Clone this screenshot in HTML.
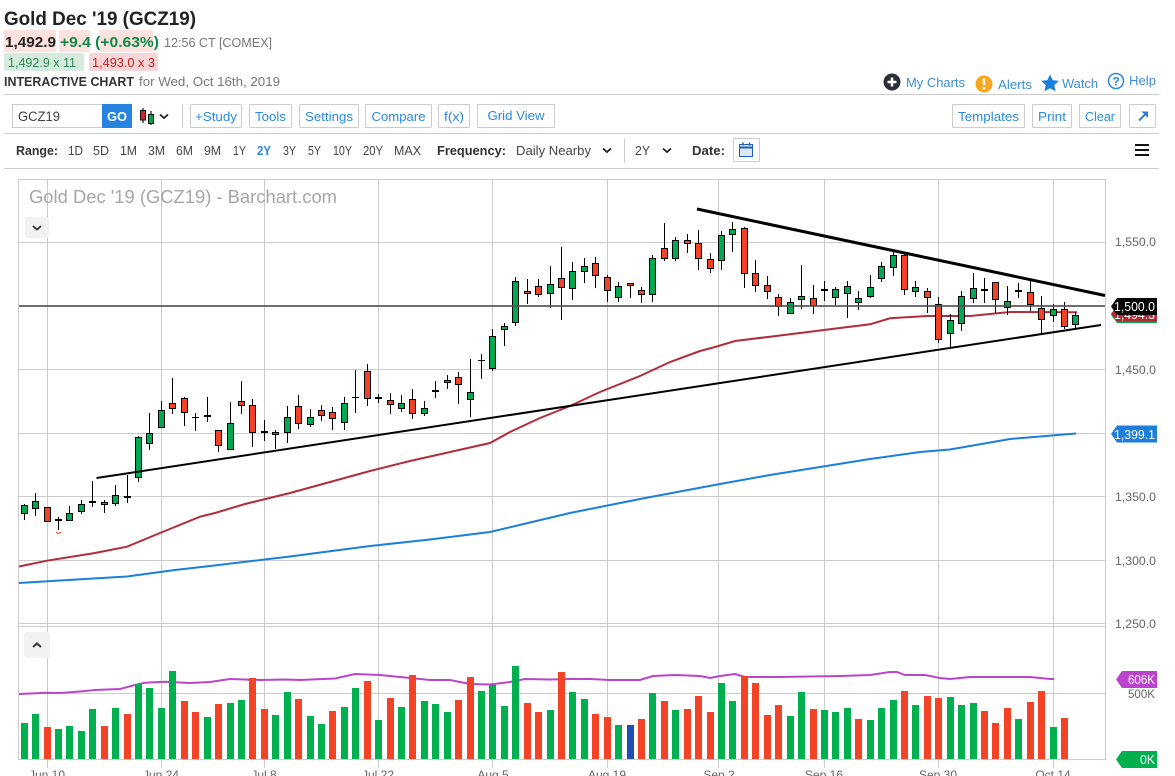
<!DOCTYPE html>
<html><head><meta charset="utf-8"><title>Gold Dec '19 (GCZ19)</title>
<style>
html,body{margin:0;padding:0;background:#fff;overflow:hidden}
svg{display:block}
text{font-family:"Liberation Sans",sans-serif;font-size:13px;fill:#444}
.b{fill:#2b8ae0;text-anchor:middle}
.btn{fill:#fff;stroke:#ccc;stroke-width:1}
.r{fill:#444;text-anchor:middle}
.ax{fill:#666;text-anchor:end;font-size:12px}
.dt{fill:#666;text-anchor:middle;font-size:12px}
.l{fill:#fff;text-anchor:end;font-size:13px}
.ln{stroke:#ccc;stroke-width:1;fill:none}
</style></head><body>
<svg width="1175" height="776" viewBox="0 0 1175 776" xmlns="http://www.w3.org/2000/svg">
<rect width="1175" height="776" fill="#fff"/>
<text x="4" y="25" textLength="192" lengthAdjust="spacingAndGlyphs" style="font-size:19px;font-weight:bold;fill:#222">Gold Dec '19 (GCZ19)</text>
<rect x="4" y="30" width="52" height="22" fill="#fde2df"/><rect x="59" y="30" width="31" height="22" fill="#fde2df"/><rect x="100" y="30" width="53" height="22" fill="#fde2df"/>
<text x="5" y="47" textLength="51" lengthAdjust="spacingAndGlyphs" style="font-size:15px;font-weight:bold;fill:#222">1,492.9</text>
<text x="60" y="47" textLength="99" lengthAdjust="spacingAndGlyphs" style="font-size:15px;font-weight:bold;fill:#0d8a47">+9.4 (+0.63%)</text>
<text x="164" y="47" textLength="108" lengthAdjust="spacingAndGlyphs" style="fill:#777">12:56 CT [COMEX]</text>
<rect x="4" y="53" width="80" height="18" rx="2" fill="#d6ebdd"/><rect x="89" y="53" width="69" height="18" rx="2" fill="#f6d6d6"/>
<text x="8" y="67" textLength="68" lengthAdjust="spacingAndGlyphs" style="fill:#2e8b57">1,492.9 x 11</text>
<text x="92" y="67" textLength="63" lengthAdjust="spacingAndGlyphs" style="fill:#c81e1e">1,493.0 x 3</text>
<text x="4" y="86" textLength="130" lengthAdjust="spacingAndGlyphs" style="font-weight:bold;fill:#333">INTERACTIVE CHART</text>
<text x="139" y="86" textLength="141" lengthAdjust="spacingAndGlyphs" style="fill:#777">for Wed, Oct 16th, 2019</text>

<circle cx="892" cy="82" r="8.5" fill="#2a2f36"/><path d="M892 77.5v9M887.5 82h9" stroke="#fff" stroke-width="2.6"/>
<text x="906" y="87" textLength="59" lengthAdjust="spacingAndGlyphs" style="fill:#3b8fdc">My Charts</text>
<circle cx="984" cy="84" r="8.5" fill="#fba61f"/><path d="M984 78.5v6.5M984 87v2.2" stroke="#fff" stroke-width="2.4"/>
<text x="998" y="89" textLength="34" lengthAdjust="spacingAndGlyphs" style="fill:#3b8fdc">Alerts</text>
<path d="M1050 74.5l2.7 5.6 6.1.8-4.5 4.2 1.2 6.1-5.5-3-5.5 3 1.2-6.1-4.5-4.2 6.1-.8z" fill="#1c7fe0"/>
<text x="1062" y="88" textLength="36" lengthAdjust="spacingAndGlyphs" style="fill:#3b8fdc">Watch</text>
<circle cx="1116" cy="81" r="7.5" fill="none" stroke="#2b8ae0" stroke-width="1.5"/>
<text x="1116" y="85.5" class="b" style="font-size:12px;font-weight:bold">?</text>
<text x="1129" y="85" textLength="27" lengthAdjust="spacingAndGlyphs" style="fill:#3b8fdc">Help</text>

<path class="ln" d="M4 94.5H1159M4 133.5H1159M4 168.5H1159M182.5 104V128M624.5 138V163"/>
<rect x="12.500" y="104.500" width="90" height="23" class="btn"/>
<text x="18" y="121" textLength="42" lengthAdjust="spacingAndGlyphs" style="fill:#444;font-size:14px">GCZ19</text>
<rect x="102" y="104" width="30" height="24" fill="#2584e0"/>
<text x="117" y="121" textLength="20" lengthAdjust="spacingAndGlyphs" style="fill:#fff;font-weight:bold;text-anchor:middle">GO</text>
<path d="M143 108v15M151 111v14" stroke="#111" stroke-width="1.2"/>
<rect x="140.500" y="110.500" width="5" height="9.500" fill="#d4202a" stroke="#111"/><rect x="148.500" y="114.500" width="5" height="9" fill="#0aa14f" stroke="#111"/>
<path d="M160 114.500l4 3.500 4-3.500" fill="none" stroke="#222" stroke-width="1.800"/>

<rect x="190.500" y="104.500" width="51" height="23" rx="1" class="btn"/><text x="216" y="121" class="b" textLength="42" lengthAdjust="spacingAndGlyphs">+Study</text>
<rect x="249.500" y="104.500" width="42" height="23" rx="1" class="btn"/><text x="270.500" y="121" class="b" textLength="31" lengthAdjust="spacingAndGlyphs">Tools</text>
<rect x="299.500" y="104.500" width="59" height="23" rx="1" class="btn"/><text x="329" y="121" class="b" textLength="48" lengthAdjust="spacingAndGlyphs">Settings</text>
<rect x="365.500" y="104.500" width="66" height="23" rx="1" class="btn"/><text x="398.500" y="121" class="b" textLength="54" lengthAdjust="spacingAndGlyphs">Compare</text>
<rect x="438.500" y="104.500" width="31" height="23" rx="1" class="btn"/><text x="454" y="121" class="b" textLength="20" lengthAdjust="spacingAndGlyphs">f(x)</text>
<rect x="477.500" y="104.500" width="77" height="23" rx="1" class="btn"/><text x="516" y="120" class="b" textLength="57" lengthAdjust="spacingAndGlyphs">Grid View</text>
<rect x="952.500" y="104.500" width="72" height="23" rx="1" class="btn"/><text x="988.500" y="121" class="b" textLength="61" lengthAdjust="spacingAndGlyphs">Templates</text>
<rect x="1032.500" y="104.500" width="39" height="23" rx="1" class="btn"/><text x="1052" y="121" class="b" textLength="28" lengthAdjust="spacingAndGlyphs">Print</text>
<rect x="1079.500" y="104.500" width="41" height="23" rx="1" class="btn"/><text x="1100" y="121" class="b" textLength="30" lengthAdjust="spacingAndGlyphs">Clear</text>
<rect x="1129.500" y="104.500" width="26" height="23" rx="1" class="btn"/>
<path d="M1139 120.500l6.500-6.500" stroke="#2b7ed0" stroke-width="2"/><path d="M1141.500 111.500h6.500v6.500z" fill="#2b7ed0"/>

<text x="16" y="155" textLength="42" lengthAdjust="spacingAndGlyphs" style="font-weight:bold;fill:#333">Range:</text>
<text x="75.500" y="155" class="r" textLength="15" lengthAdjust="spacingAndGlyphs">1D</text>
<text x="101" y="155" class="r" textLength="16" lengthAdjust="spacingAndGlyphs">5D</text>
<text x="128.500" y="155" class="r" textLength="17" lengthAdjust="spacingAndGlyphs">1M</text>
<text x="156.500" y="155" class="r" textLength="17" lengthAdjust="spacingAndGlyphs">3M</text>
<text x="184.500" y="155" class="r" textLength="17" lengthAdjust="spacingAndGlyphs">6M</text>
<text x="212.500" y="155" class="r" textLength="17" lengthAdjust="spacingAndGlyphs">9M</text>
<text x="239.500" y="155" class="r" textLength="13" lengthAdjust="spacingAndGlyphs">1Y</text>
<text x="264" y="155" class="b" textLength="14" lengthAdjust="spacingAndGlyphs" style="font-weight:bold">2Y</text>
<text x="289.500" y="155" class="r" textLength="13" lengthAdjust="spacingAndGlyphs">3Y</text>
<text x="314.500" y="155" class="r" textLength="13" lengthAdjust="spacingAndGlyphs">5Y</text>
<text x="342.500" y="155" class="r" textLength="19" lengthAdjust="spacingAndGlyphs">10Y</text>
<text x="373" y="155" class="r" textLength="20" lengthAdjust="spacingAndGlyphs">20Y</text>
<text x="407.500" y="155" class="r" textLength="27" lengthAdjust="spacingAndGlyphs">MAX</text>
<text x="437" y="155" textLength="69" lengthAdjust="spacingAndGlyphs" style="font-weight:bold;fill:#333">Frequency:</text>
<text x="516" y="155" textLength="75" lengthAdjust="spacingAndGlyphs">Daily Nearby</text>
<path d="M603 148.500l4 3.500 4-3.500M663 148.500l4 3.500 4-3.500" fill="none" stroke="#222" stroke-width="1.800"/>
<text x="635" y="155" textLength="15" lengthAdjust="spacingAndGlyphs">2Y</text>
<text x="692" y="155" textLength="33" lengthAdjust="spacingAndGlyphs" style="font-weight:bold;fill:#333">Date:</text>
<rect x="733.500" y="138.500" width="26" height="23" rx="1" class="btn"/>
<rect x="739.500" y="144.500" width="13" height="12" fill="#dbe7f7" stroke="#1f5fc0"/><path d="M739.500 147.500h13" stroke="#1f5fc0" stroke-width="2"/><path d="M743 142.500v3M749.500 142.500v3" stroke="#1f5fc0" stroke-width="1.500"/>
<path d="M1135 145h14M1135 150h14M1135 155h14" stroke="#111" stroke-width="2"/>

<!-- grid -->
<path class="ln" d="M19 179.500H1105.500M19 242.500H1105M19 369.500H1105M19 433.500H1105M19 496.500H1105M19 560.500H1105M19 623.500H1105M19 626.500H1105M19 693.500H1105M18.500 179V760M1105.500 179V760M18.500 759.500H1105.500M47.500 179V768M161.500 179V768M264.500 179V768M378.500 179V768M492.500 179V768M607.500 179V768M718.500 179V768M824.500 179V768M938.500 179V768M1053.500 179V768"/>
<text x="29" y="203" textLength="308" lengthAdjust="spacingAndGlyphs" style="font-size:18px;fill:#a6a6a6">Gold Dec '19 (GCZ19) - Barchart.com</text>
<rect x="25" y="217" width="24" height="21" rx="3" fill="#f2f2f2"/><path d="M33 226l4 3.500 4-3.500" fill="none" stroke="#333" stroke-width="1.800"/>
<rect x="24" y="632" width="26" height="26" rx="3" fill="#f2f2f2"/><path d="M33 647l4-3.500 4 3.500" fill="none" stroke="#333" stroke-width="2"/>

<!-- moving averages -->
<polyline fill="none" stroke="#1b7fdb" stroke-width="2" points="19,583 60,580.500 127,576.500 175,570 210,566 290,556.500 370,546 430,539.500 490,532 530,522.500 570,513 640,499 720,484 770,475 820,467 870,459 920,452 950,449.500 1010,439 1076,433.500"/>
<polyline fill="none" stroke="#b22d3a" stroke-width="2" points="19,566.500 47,560.700 95,553 127,546.700 160,533 200,516.700 215,513 245,504 290,493 330,482 370,471 410,461 450,452 490,443 510,432 540,418 570,406 600,392 640,376 670,362 700,351 715,347 735,341 770,336.700 824,330 870,324.300 890,318.300 927,316 970,316 1010,312 1077,312.300"/>
<path d="M56 532q2.500 2.500 5 0" fill="none" stroke="#f24225" stroke-width="1"/>

<!-- wicks -->
<path fill="none" stroke="#000" stroke-width="1" d="M24.500 504V520M35.500 493V516M58.500 517V530M69.500 506V513M81.500 500V514M92.500 481V507M104.500 500V513M115.500 485V506M127.500 475V503M138.500 436V482M149.500 413V450M161.500 401V410M172.500 378V414M184.500 397V426M195.500 413V431M207.500 397V422M218.500 445V452M230.500 402V424M241.500 381V414M252.500 399V447M264.500 420V441M275.500 430V449M287.500 406V443M298.500 395V429M310.500 409V427M321.500 405V421M332.500 407V430M344.500 397V430M355.500 370V413M367.500 364V406M378.500 394V403M390.500 393V414M401.500 395V412M412.500 389V419M424.500 401V416M435.500 381V398M447.500 375V389M458.500 372V404M470.500 359V417M481.500 354V379M492.500 329V371M504.500 323V346M515.500 277V326M527.500 279V304M538.500 279V297M550.500 266V308M561.500 247V320M572.500 262V300M584.500 258V283M595.500 257V288M607.500 275V302M618.500 282V302M630.500 283V298M641.500 287V303M652.500 255V302M664.500 223V261M675.500 237V261M687.500 234V253M698.500 230V270M710.500 253V273M721.500 231V270M732.500 222V252M744.500 227V288M755.500 260V292M767.500 276V299M778.500 294V316M790.500 298V314M801.500 265V309M813.500 285V314M824.500 281V301M835.500 287V305M847.500 281V318M858.500 291V310M870.500 275V298M881.500 262V282M893.500 252V276M904.500 252V295M915.500 281V297M927.500 288V313M938.500 297V343M950.500 314V349M961.500 291V331M973.500 273V303M984.500 278V303M995.500 282V313M1007.500 286V315M1018.500 283V298M1030.500 280V311M1041.500 296V334M1053.500 304V322M1064.500 302V329M1075.500 312V328M192 417.500H199M352 397.500H359M478 360.500H485"/>
<path fill="#000" stroke="#000" d="M55.500 519.500h6v1h-6zM204.500 415.500h6v1h-6z"/>
<!-- green candles -->
<path fill="#00a94f" stroke="#000" stroke-width="1" d="M21.500 505.500h6V513.500h-6zM32.500 501.500h6V508.500h-6zM66.500 513.500h6V520.500h-6zM78.500 504.500h6V511.500h-6zM112.500 495.500h6V503.500h-6zM135.500 437.500h6V477.500h-6zM146.500 433.500h6V443.500h-6zM158.500 410.500h6V427.500h-6zM227.500 423.500h6V449.500h-6zM272.500 432.500h6V434.500h-6zM284.500 417.500h6V432.500h-6zM307.500 417.500h6V424.500h-6zM341.500 403.500h6V422.500h-6zM398.500 403.500h6V408.500h-6zM421.500 408.500h6V413.500h-6zM432.500 390.500h6V391.500h-6zM444.500 380.500h6V382.500h-6zM467.500 392.500h6V399.500h-6zM489.500 336.500h6V368.500h-6zM501.500 326.500h6V329.500h-6zM512.500 281.500h6V322.500h-6zM547.500 284.500h6V293.500h-6zM569.500 271.500h6V288.500h-6zM581.500 266.500h6V271.500h-6zM615.500 286.500h6V297.500h-6zM649.500 258.500h6V294.500h-6zM672.500 240.500h6V258.500h-6zM718.500 235.500h6V260.500h-6zM729.500 229.500h6V234.500h-6zM787.500 302.500h6V313.500h-6zM798.500 296.500h6V299.500h-6zM832.500 289.500h6V297.500h-6zM844.500 286.500h6V293.500h-6zM855.500 298.500h6V302.500h-6zM867.500 287.500h6V296.500h-6zM878.500 266.500h6V278.500h-6zM890.500 255.500h6V267.500h-6zM912.500 287.500h6V291.500h-6zM947.500 320.500h6V333.500h-6zM958.500 296.500h6V323.500h-6zM970.500 288.500h6V298.500h-6zM981.500 289.500h6V290.500h-6zM1004.500 301.500h6V307.500h-6zM1015.500 290.500h6V291.500h-6zM1050.500 309.500h6V315.500h-6zM1072.500 315.500h6V324.500h-6z"/>
<!-- red candles -->
<path fill="#f24225" stroke="#000" stroke-width="1" d="M44.500 507.500h6V521.500h-6zM89.500 501.500h6V502.500h-6zM101.500 502.500h6V504.500h-6zM124.500 496.500h6V497.500h-6zM169.500 403.500h6V408.500h-6zM181.500 398.500h6V412.500h-6zM215.500 430.500h6V445.500h-6zM238.500 401.500h6V405.500h-6zM249.500 405.500h6V432.500h-6zM261.500 431.500h6V432.500h-6zM295.500 406.500h6V423.500h-6zM318.500 410.500h6V415.500h-6zM329.500 412.500h6V418.500h-6zM364.500 371.500h6V398.500h-6zM375.500 397.500h6V398.500h-6zM387.500 400.500h6V404.500h-6zM409.500 399.500h6V413.500h-6zM455.500 377.500h6V384.500h-6zM524.500 291.500h6V293.500h-6zM535.500 286.500h6V294.500h-6zM558.500 278.500h6V287.500h-6zM592.500 263.500h6V275.500h-6zM604.500 277.500h6V290.500h-6zM627.500 283.500h6V285.500h-6zM638.500 290.500h6V294.500h-6zM661.500 248.500h6V258.500h-6zM684.500 240.500h6V243.500h-6zM695.500 243.500h6V258.500h-6zM707.500 259.500h6V268.500h-6zM741.500 228.500h6V273.500h-6zM752.500 273.500h6V285.500h-6zM764.500 285.500h6V291.500h-6zM775.500 297.500h6V306.500h-6zM810.500 298.500h6V305.500h-6zM821.500 289.500h6V290.500h-6zM901.500 255.500h6V289.500h-6zM924.500 291.500h6V297.500h-6zM935.500 304.500h6V339.500h-6zM992.500 282.500h6V299.500h-6zM1027.500 292.500h6V304.500h-6zM1038.500 308.500h6V319.500h-6zM1061.500 309.500h6V326.500h-6z"/>
<!-- 1500 line and trend lines -->
<path d="M19 306H1105" stroke="#555" stroke-width="2" opacity=".85"/>
<path d="M96.500 478L1101 325" stroke="#000" stroke-width="2"/>
<path d="M697 209L1105 295.500" stroke="#000" stroke-width="3"/>

<!-- volume -->
<polyline fill="none" stroke="#bb44cc" stroke-width="2" points="19,694 47,692.700 60,693 80,691.500 95,690 120,689 135,685 145,682.700 165,681.700 190,683 210,682 230,679 260,680 285,679.500 300,680 335,678.500 355,674 380,675 400,677 410,678 430,680 450,680 470,684 490,684.500 510,682 525,679 550,679.500 570,679 590,679 610,680 640,680 653,676 675,675 700,676 710,678 720,676 735,674 745,677 780,677 840,676 870,675 890,672 897,672 905,675 925,675 940,678 950,679 970,677 1000,677 1030,677 1050,679 1054,679"/>
<path fill="#00b04f" d="M21 723h7V759h-7zM32 714h7V759h-7zM55 729h7V759h-7zM66 726h7V759h-7zM78 731h7V759h-7zM89 709h7V759h-7zM112 708h7V759h-7zM135 684h7V759h-7zM146 688h7V759h-7zM158 708h7V759h-7zM169 671h7V759h-7zM204 717h7V759h-7zM227 703h7V759h-7zM238 700h7V759h-7zM272 715h7V759h-7zM284 692h7V759h-7zM307 716h7V759h-7zM318 724h7V759h-7zM341 707h7V759h-7zM352 688h7V759h-7zM375 720h7V759h-7zM398 707h7V759h-7zM421 701h7V759h-7zM432 704h7V759h-7zM444 712h7V759h-7zM478 691h7V759h-7zM489 685h7V759h-7zM501 706h7V759h-7zM512 666h7V759h-7zM547 710h7V759h-7zM569 692h7V759h-7zM581 699h7V759h-7zM615 725h7V759h-7zM649 693h7V759h-7zM672 710h7V759h-7zM718 683h7V759h-7zM729 701h7V759h-7zM787 716h7V759h-7zM798 692h7V759h-7zM821 710h7V759h-7zM832 712h7V759h-7zM844 708h7V759h-7zM867 720h7V759h-7zM878 708h7V759h-7zM890 700h7V759h-7zM912 705h7V759h-7zM947 697h7V759h-7zM958 705h7V759h-7zM970 703h7V759h-7zM1015 719h7V759h-7zM1050 727h7V759h-7z"/>
<path fill="#f34326" d="M44 727h7V759h-7zM101 726h7V759h-7zM124 714h7V759h-7zM181 701h7V759h-7zM192 712h7V759h-7zM215 704h7V759h-7zM249 678h7V759h-7zM261 709h7V759h-7zM295 699h7V759h-7zM329 711h7V759h-7zM364 681h7V759h-7zM387 698h7V759h-7zM409 675h7V759h-7zM455 700h7V759h-7zM467 677h7V759h-7zM524 703h7V759h-7zM535 712h7V759h-7zM558 672h7V759h-7zM592 714h7V759h-7zM604 717h7V759h-7zM638 719h7V759h-7zM661 701h7V759h-7zM684 709h7V759h-7zM695 696h7V759h-7zM707 712h7V759h-7zM741 676h7V759h-7zM752 683h7V759h-7zM764 715h7V759h-7zM775 705h7V759h-7zM810 709h7V759h-7zM855 719h7V759h-7zM901 691h7V759h-7zM924 696h7V759h-7zM935 698h7V759h-7zM981 711h7V759h-7zM992 723h7V759h-7zM1004 708h7V759h-7zM1027 702h7V759h-7zM1038 691h7V759h-7zM1061 718h7V759h-7z"/>
<rect x="627" y="725" width="7" height="34" fill="#1f4fb5"/>

<!-- price axis -->
<text x="1156" y="246" class="ax" textLength="41" lengthAdjust="spacingAndGlyphs">1,550.0</text>
<text x="1156" y="374" class="ax" textLength="41" lengthAdjust="spacingAndGlyphs">1,450.0</text>
<text x="1156" y="501" class="ax" textLength="41" lengthAdjust="spacingAndGlyphs">1,350.0</text>
<text x="1156" y="565" class="ax" textLength="41" lengthAdjust="spacingAndGlyphs">1,300.0</text>
<text x="1156" y="628" class="ax" textLength="41" lengthAdjust="spacingAndGlyphs">1,250.0</text>
<path d="M1111 315l6-7H1157V323H1117z" fill="#0aa64f"/>
<path d="M1111 313.500l6-7H1157V321.500H1117z" fill="#b3282d"/>
<text x="1155" y="319" class="l" textLength="41" lengthAdjust="spacingAndGlyphs">1,494.3</text>
<path d="M1111 306.500l6-8.500H1157V315H1117z" fill="#000"/>
<text x="1155" y="311" class="l" textLength="41" lengthAdjust="spacingAndGlyphs">1,500.0</text>
<path d="M1111 434l6-8.500H1157V442.500H1117z" fill="#1b7fdb"/>
<text x="1155" y="439" class="l" textLength="41" lengthAdjust="spacingAndGlyphs">1,399.1</text>
<path d="M1116 679.500l6-8.500H1157V688H1122z" fill="#bb44cc"/>
<text x="1155" y="684" class="l" textLength="27" lengthAdjust="spacingAndGlyphs">606K</text>
<text x="1155" y="698" class="ax" textLength="27" lengthAdjust="spacingAndGlyphs">500K</text>
<path d="M1116 759.500l6-8.500H1157V768H1122z" fill="#00b04f"/>
<text x="1155" y="764" class="l" textLength="15" lengthAdjust="spacingAndGlyphs">0K</text>

<!-- date axis -->
<text x="47" y="779" class="dt">Jun 10</text>
<text x="161" y="779" class="dt">Jun 24</text>
<text x="264" y="779" class="dt">Jul 8</text>
<text x="378" y="779" class="dt">Jul 22</text>
<text x="493" y="779" class="dt">Aug 5</text>
<text x="607" y="779" class="dt">Aug 19</text>
<text x="719" y="779" class="dt">Sep 2</text>
<text x="824" y="779" class="dt">Sep 16</text>
<text x="938" y="779" class="dt">Sep 30</text>
<text x="1053" y="779" class="dt">Oct 14</text>
</svg>
</body></html>
